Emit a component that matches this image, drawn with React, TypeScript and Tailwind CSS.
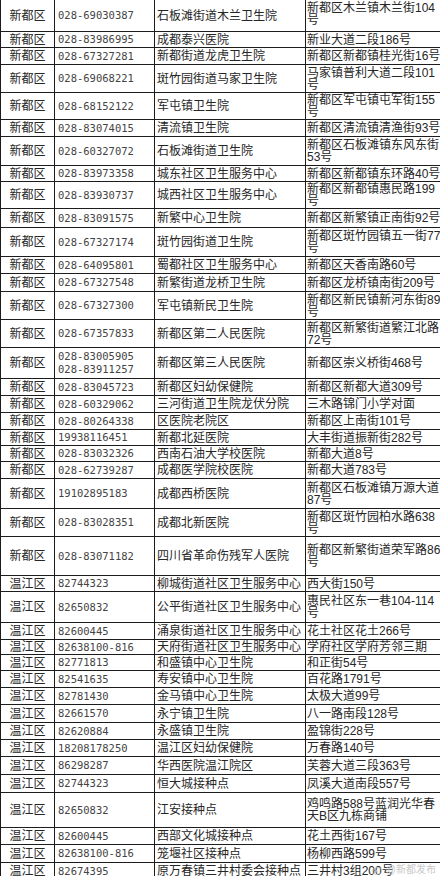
type Row = {
  district: string;
  phone: string;
  name: string;
  address: string;
  h: string;
};

const rows: Row[] = [
  { district: "新都区", phone: "028-69030387", name: "石板滩街道木兰卫生院", address: "新都区木兰镇木兰街104\n号", h: "h-[32px]" },
  { district: "新都区", phone: "028-83986995", name: "成都泰兴医院", address: "新业大道二段186号", h: "h-[16px]" },
  { district: "新都区", phone: "028-67327281", name: "新都街道龙虎卫生院", address: "新都区新都镇桂光街16号", h: "h-[17px]" },
  { district: "新都区", phone: "028-69068221", name: "斑竹园街道马家卫生院", address: "马家镇普利大道二段101\n号", h: "h-[28px]" },
  { district: "新都区", phone: "028-68152122", name: "军屯镇卫生院", address: "新都区军屯镇屯军街155\n号", h: "h-[27px]" },
  { district: "新都区", phone: "028-83074015", name: "清流镇卫生院", address: "新都区清流镇清渔街93号", h: "h-[17px]" },
  { district: "新都区", phone: "028-60327072", name: "石板滩街道卫生院", address: "新都区石板滩镇东风东街\n53号", h: "h-[29px]" },
  { district: "新都区", phone: "028-83973358", name: "城东社区卫生服务中心", address: "新都区新都镇东环路40号", h: "h-[16px]" },
  { district: "新都区", phone: "028-83930737", name: "城西社区卫生服务中心", address: "新都区新都镇惠民路199\n号", h: "h-[27px]" },
  { district: "新都区", phone: "028-83091575", name: "新繁中心卫生院", address: "新都区新繁镇正南街92号", h: "h-[19px]" },
  { district: "新都区", phone: "028-67327174", name: "斑竹园街道卫生院", address: "新都区斑竹园镇五一街77\n号", h: "h-[29px]" },
  { district: "新都区", phone: "028-64095801", name: "蜀都社区卫生服务中心", address: "新都区天香南路60号", h: "h-[17px]" },
  { district: "新都区", phone: "028-67327548", name: "新繁街道龙桥卫生院", address: "新都区龙桥镇南街209号", h: "h-[18px]" },
  { district: "新都区", phone: "028-67327300", name: "军屯镇新民卫生院", address: "新都区新民镇新河东街89\n号", h: "h-[28px]" },
  { district: "新都区", phone: "028-67357833", name: "新都区第二人民医院", address: "新都区新繁街道繁江北路\n72号", h: "h-[28px]" },
  { district: "新都区", phone: "028-83005905\n028-83911257", name: "新都区第三人民医院", address: "新都区崇义桥街468号", h: "h-[31px]" },
  { district: "新都区", phone: "028-83045723", name: "新都区妇幼保健院", address: "新都区新都大道309号", h: "h-[17px]" },
  { district: "新都区", phone: "028-60329062", name: "三河街道卫生院龙伏分院", address: "三木路锦门小学对面", h: "h-[17px]" },
  { district: "新都区", phone: "028-80264338", name: "区医院老院区", address: "新都区上南街101号", h: "h-[17px]" },
  { district: "新都区", phone: "19938116451", name: "新都北延医院", address: "大丰街道振新街282号", h: "h-[16px]" },
  { district: "新都区", phone: "028-83032326", name: "西南石油大学校医院", address: "新都大道8号", h: "h-[16px]" },
  { district: "新都区", phone: "028-62739287", name: "成都医学院校医院", address: "新都大道783号", h: "h-[17px]" },
  { district: "新都区", phone: "19102895183", name: "成都西桥医院", address: "新都区石板滩镇万源大道\n87号", h: "h-[30px]" },
  { district: "新都区", phone: "028-83028351", name: "成都北新医院", address: "新都区斑竹园柏水路638\n号", h: "h-[28px]" },
  { district: "新都区", phone: "028-83071182", name: "四川省革命伤残军人医院", address: "新都区新繁街道荣军路86\n号", h: "h-[39px]" },
  { district: "温江区", phone: "82744323", name: "柳城街道社区卫生服务中心", address: "西大街150号", h: "h-[16px]" },
  { district: "温江区", phone: "82650832", name: "公平街道社区卫生服务中心", address: "惠民社区东一巷104-114\n号", h: "h-[31px]" },
  { district: "温江区", phone: "82600445", name: "涌泉街道社区卫生服务中心", address: "花土社区花土266号", h: "h-[17px]" },
  { district: "温江区", phone: "82638100-816", name: "天府街道社区卫生服务中心", address: "学府社区学府芳邻三期", h: "h-[15px]" },
  { district: "温江区", phone: "82771813", name: "和盛镇中心卫生院", address: "和正街54号", h: "h-[16px]" },
  { district: "温江区", phone: "82541635", name: "寿安镇中心卫生院", address: "百花路1791号", h: "h-[17px]" },
  { district: "温江区", phone: "82781430", name: "金马镇中心卫生院", address: "太极大道99号", h: "h-[17px]" },
  { district: "温江区", phone: "82661570", name: "永宁镇卫生院", address: "八一路南段128号", h: "h-[18px]" },
  { district: "温江区", phone: "82620884", name: "永盛镇卫生院", address: "盈锦街228号", h: "h-[17px]" },
  { district: "温江区", phone: "18208178250", name: "温江区妇幼保健院", address: "万春路140号", h: "h-[17px]" },
  { district: "温江区", phone: "86298287", name: "华西医院温江院区", address: "芙蓉大道三段363号", h: "h-[18px]" },
  { district: "温江区", phone: "82744323", name: "恒大城接种点", address: "凤溪大道南段557号", h: "h-[18px]" },
  { district: "温江区", phone: "82650832", name: "江安接种点", address: "鸡鸣路588号蓝润光华春\n天B区九栋商铺", h: "h-[35px]" },
  { district: "温江区", phone: "82600445", name: "西部文化城接种点", address: "花土西街167号", h: "h-[17px]" },
  { district: "温江区", phone: "82638100-816", name: "笼堰社区接种点", address: "杨柳西路599号", h: "h-[18px]" },
  { district: "温江区", phone: "82674395", name: "原万春镇三井村委会接种点", address: "三井村3组200号", h: "h-[17px]" },
];

export default function App() {
  return (
    <div className="relative h-[876px] w-[440px] overflow-hidden bg-white font-['Liberation_Sans','Noto_Sans_CJK_SC',sans-serif] text-[12px] text-[#262626]">
      {rows.map((r, i) => (
        <div
          key={i}
          className={`grid grid-cols-[55px_100px_151px_134px] border-b border-[#1c1c1c] ${r.h}`}
        >
          <div className="flex items-center justify-center border-x border-[#1c1c1c] leading-[12px]">
            {r.district}
          </div>
          <div className="flex items-center whitespace-pre border-r border-[#1c1c1c] pl-[3px] font-['DejaVu_Sans_Mono',monospace] text-[10.5px] leading-[13px] text-[#444]">
            {r.phone}
          </div>
          <div className="flex items-center whitespace-nowrap border-r border-[#1c1c1c] pl-[2px] leading-[12px]">
            {r.name}
          </div>
          <div
            className={`flex whitespace-pre pl-[1px] leading-[12px] ${i === 0 ? "items-start pt-[2px]" : "items-center"}`}
          >
            {r.address}
          </div>
        </div>
      ))}
      <div className="absolute bottom-[1px] right-[4px] flex items-center gap-[3px] text-[10px] leading-[10px] text-[#c9c9c9]">
        <svg width="11" height="10" viewBox="0 0 22 20" className="opacity-80">
          <ellipse cx="10" cy="12" rx="9" ry="6.5" fill="none" stroke="#c4c4c4" strokeWidth="2" />
          <circle cx="9" cy="12.5" r="2.5" fill="#c4c4c4" />
        </svg>
        <span>@新都发布</span>
      </div>
    </div>
  );
}
